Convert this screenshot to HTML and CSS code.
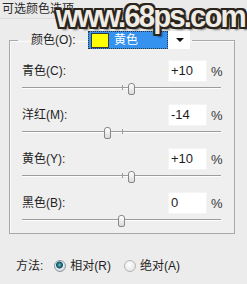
FILE: index.html
```html
<!DOCTYPE html>
<html lang="zh-CN">
<head>
    <meta charset="UTF-8">
    <meta name="viewport" content="width=device-width, initial-scale=1.0">
    <title>可选颜色选项</title>
    <link rel="stylesheet" href="styles.css">
</head>
<body>

    <div class="title">可选颜色选项</div>

    <fieldset class="group">
        <legend class="pick">
            <span class="pick-label">颜色(O):</span>
            <span class="combo">
                <span class="combo-sel"><i class="swatch"></i>黄色</span>
                <span class="combo-arrow"></span>
            </span>
        </legend>

        <div class="adj">
            <div class="adj-head">
                <span class="adj-name">青色(C):</span>
                <span class="num">+10</span>
                <span class="pct">%</span>
            </div>
            <div class="track">
                <div class="groove"></div>
                <span class="tick"></span>
                <span class="thumb" style="left: 55%"></span>
            </div>
        </div>

        <div class="adj">
            <div class="adj-head">
                <span class="adj-name">洋红(M):</span>
                <span class="num">-14</span>
                <span class="pct">%</span>
            </div>
            <div class="track">
                <div class="groove"></div>
                <span class="tick"></span>
                <span class="thumb" style="left: 43%"></span>
            </div>
        </div>

        <div class="adj">
            <div class="adj-head">
                <span class="adj-name">黄色(Y):</span>
                <span class="num">+10</span>
                <span class="pct">%</span>
            </div>
            <div class="track">
                <div class="groove"></div>
                <span class="tick"></span>
                <span class="thumb" style="left: 55%"></span>
            </div>
        </div>

        <div class="adj">
            <div class="adj-head">
                <span class="adj-name">黑色(B):</span>
                <span class="num">0</span>
                <span class="pct">%</span>
            </div>
            <div class="track">
                <div class="groove"></div>
                <span class="tick"></span>
                <span class="thumb" style="left: 50%"></span>
            </div>
        </div>
    </fieldset>

    <div class="method">
        <span class="method-label">方法:</span>
        <span class="radio checked"></span>
        <span class="radio-text">相对(R)</span>
        <span class="radio"></span>
        <span class="radio-text">绝对(A)</span>
    </div>

    <!-- watermark over the dialog -->
    <div class="mark">www.68ps.com</div>

</body>
</html>
```

FILE: styles.css
```css
body {
    margin: 0;
    width: 247px;
    height: 284px;
    overflow: hidden;
    position: relative;
    background-color: #ececec;
    font-family: "Liberation Sans", "Noto Sans CJK SC", sans-serif;
    font-size: 12px;
    color: #1e1e1e;
}
.title {
    height: 19px;
    padding: 1px 0 0 2px;
    box-sizing: border-box;
    line-height: 16px;
    color: #2a2a2a;
    background-color: #eaeaea;
    border-bottom: 1px solid #dcdcdc;
}
.group {
    margin: 12px 12px 0 9px;
    padding: 11px 12px 0 12px;
    border: 1px solid #a9a9a9;
    box-shadow: inset 1px 1px 0 #fafafa;
    background-color: #efefef;
}
.pick {
    display: flex;
    align-items: center;
    margin-left: -4px;
    padding: 0 2px 0 13px;
    height: 18px;
}
.pick-label {
    width: 57px;
    line-height: 18px;
}
.combo {
    display: flex;
    width: 102px;
    height: 18px;
    background-color: #fff;
}
.combo-sel {
    display: flex;
    align-items: center;
    width: 80px;
    box-sizing: border-box;
    border: 1px dotted #333;
    background-color: #3592ee;
    color: #fff;
    line-height: 16px;
}
.swatch {
    width: 16px;
    height: 13px;
    margin: 0 5px 0 2px;
    background-color: #ffff00;
    border: 1px solid #3a3a3a;
}
.combo-arrow {
    width: 0;
    height: 0;
    margin: 7px 0 0 8px;
    border-left: 4px solid transparent;
    border-right: 4px solid transparent;
    border-top: 4px solid #111;
}
.adj {
    margin-bottom: 3px;
}
.adj:last-child {
    margin-bottom: 0;
}
.adj-head {
    display: flex;
    align-items: center;
    height: 22px;
}
.adj-name {
    flex: 1;
    line-height: 16px;
}
.num {
    width: 39px;
    height: 22px;
    box-sizing: border-box;
    padding-left: 2px;
    margin-right: 4px;
    background-color: #fff;
    border: 1px solid #f4f4f4;
    font-size: 13px;
    line-height: 20px;
}
.pct {
    width: 11px;
    font-size: 13px;
    color: #333;
}
.track {
    position: relative;
    height: 19px;
    padding-top: 5px;
    box-sizing: border-box;
}
.groove {
    margin-right: 1px;
    height: 0;
    border-top: 1px solid #9c9c9c;
    border-bottom: 1px solid #fdfdfd;
}
.tick {
    position: absolute;
    left: 50%;
    top: 3px;
    width: 1px;
    height: 5px;
    background-color: #9c9c9c;
}
.thumb {
    position: absolute;
    top: 1px;
    width: 7px;
    height: 12px;
    margin-left: -4px;
    box-sizing: border-box;
    border: 1px solid #888;
    border-radius: 3px 3px 2px 2px;
    background: linear-gradient(#ffffff, #d9d9d9);
}
.method {
    display: flex;
    align-items: center;
    height: 16px;
    margin-top: 24px;
    padding-left: 16px;
    line-height: 16px;
}
.method-label {
    margin-right: 11px;
}
.radio {
    width: 12px;
    height: 12px;
    box-sizing: border-box;
    border-radius: 50%;
    border: 1px solid #b4b4b4;
    background: radial-gradient(circle at 40% 35%, #ffffff, #dedede);
}
.radio.checked {
    border-color: #8d9aa0;
    background: radial-gradient(circle at 45% 40%, #6fc2c8 0, #1f7482 2px, #17505c 3px, #e9eef0 4px, #cfd8dc 6px);
}
.radio-text {
    margin: 0 13px 0 4px;
}
.mark {
    position: absolute;
    left: 56px;
    top: 1px;
    font-family: "Liberation Sans", sans-serif;
    font-weight: bold;
    font-size: 31px;
    line-height: 31px;
    letter-spacing: -2px;
    color: #efece6;
    transform: scaleX(0.95);
    transform-origin: left top;
    text-shadow:
        2px 0 0 #2b241c, -2px 0 0 #2b241c, 0 2px 0 #2b241c, 0 -2px 0 #2b241c,
        2px 2px 0 #2b241c, -2px 2px 0 #2b241c, 2px -2px 0 #2b241c, -2px -2px 0 #2b241c,
        3px 3px 2px rgba(0, 0, 0, 0.5);
}
```
